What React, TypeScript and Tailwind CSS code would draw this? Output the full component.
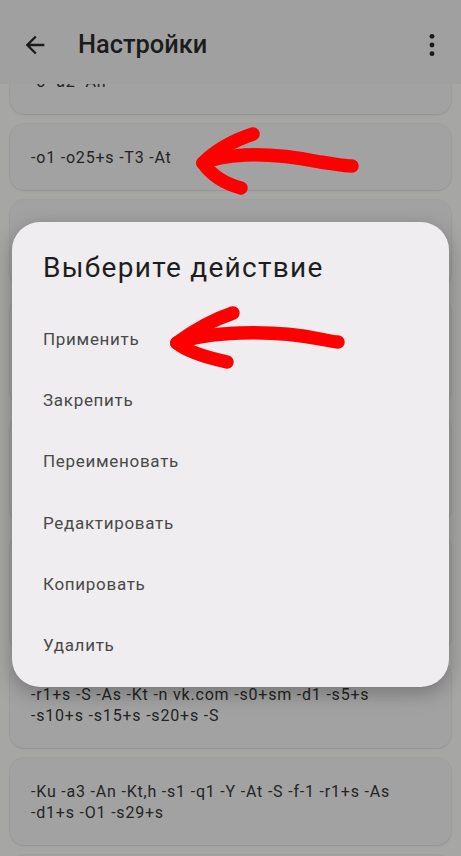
import React, { useLayoutEffect, useRef } from "react";

type Card = { lines: string[]; extra?: boolean };

const cards: Card[] = [
  { lines: ["-o -a2 -An"] },
  { lines: ["-o1 -o25+s -T3 -At"] },
  { lines: ["-Ku -a3 -An -Kt,h -s1 -q1 -Y -At", "-d1+s -O1"] },
  { lines: ["-r1+s -S -As -Kt -n vk.com -s0+sm", "-s5+s -s10+s -s15+s -s20+s -S", "-O1 -s29+s"] },
  { lines: ["-Ku -a3 -An -Kt,h -s1 -q1 -Y -At", "-r1+s -As -d1+s -O1 -s29+s", "-T3 -At"] },
  { lines: ["-o1 -o25+s -T3 -At -Ku -a3 -An", "-s1 -q1 -Y -At -S -f-1 -r1+s", "-d1+s -O1"], extra: true },
  { lines: ["-r1+s -S -As -Kt -n vk.com -s0+sm -d1 -s5+s", "-s10+s -s15+s -s20+s -S"] },
  { lines: ["-Ku -a3 -An -Kt,h -s1 -q1 -Y -At -S -f-1 -r1+s -As", "-d1+s -O1 -s29+s"] },
  { lines: ["-o1 -o25+s -T3 -At"] },
];

const actions = ["Применить", "Закрепить", "Переименовать", "Редактировать", "Копировать", "Удалить"];

export default function App() {
  const scrollRef = useRef<HTMLDivElement>(null);
  useLayoutEffect(() => {
    if (scrollRef.current) scrollRef.current.scrollTop = 46;
  }, []);

  return (
    <div
      className="relative h-[856px] w-[461px] overflow-hidden bg-[#a6a6a5] flex flex-col"
      style={{ fontFamily: "Roboto, 'Noto Sans', sans-serif" }}
    >
      {/* App bar */}
      <div className="h-[84px] shrink-0 bg-[#a0a0a0] flex items-center pt-[6px] relative z-10">
        <svg width="28" height="28" viewBox="0 0 24 24" className="ml-[21px] text-[#1a1a1a]" fill="currentColor">
          <path d="M20 11H7.83l5.59-5.59L12 4l-8 8 8 8 1.41-1.41L7.83 13H20v-2z" />
        </svg>
        <div className="ml-[29px] text-[25.4px] font-medium text-[#1c1c1c] leading-none">Настройки</div>
        <div className="flex-1" />
        <svg width="28" height="28" viewBox="0 0 24 24" className="mr-[15px] text-[#1a1a1a]" fill="currentColor">
          <circle cx="12" cy="4.6" r="2.1" />
          <circle cx="12" cy="12" r="2.1" />
          <circle cx="12" cy="19.4" r="2.1" />
        </svg>
      </div>

      {/* List */}
      <div ref={scrollRef} className="flex-1 overflow-hidden">
        <div className="flex flex-col gap-[10px] px-[10px] pt-[10px] pb-[40px]">
          {cards.map((c, i) => (
            <div
              key={i}
              className={
                "overflow-hidden rounded-[14px] bg-[#a2a2a2] shadow-[0_0_0_1px_rgba(0,0,0,0.035),0_1px_2px_rgba(0,0,0,0.08)] px-[21px] text-[16px] tracking-[0.8px] leading-[21px] text-[#242424] " +
                (c.extra ? "py-[27.5px]" : "py-[22.5px]")
              }
            >
              {c.lines.map((l, j) => (
                <div key={j} className="whitespace-nowrap">
                  {l}
                </div>
              ))}
            </div>
          ))}
        </div>
      </div>

      {/* Dialog overlay */}
      <div className="absolute inset-0 z-20 pt-[222px] px-[12px]">
        <div className="rounded-[28px] bg-[#efedef] shadow-[0_6px_20px_rgba(0,0,0,0.28)] pt-[30px] pb-[10px] px-[31px]">
          <div className="text-[28px] tracking-[1.3px] leading-[32px] text-[#1e1e1e] whitespace-nowrap">
            Выберите действие
          </div>
          <div className="mt-[25px] flex flex-col">
            {actions.map((a) => (
              <div key={a} className="h-[61.3px] flex items-center text-[17px] tracking-[0.7px] text-[#494949]">
                {a}
              </div>
            ))}
          </div>
        </div>
      </div>

      {/* Red hand-drawn arrows */}
      <svg
        className="absolute inset-0 z-30 pointer-events-none"
        width="461"
        height="856"
        viewBox="0 0 461 856"
        fill="none"
        stroke="#ff0000"
        strokeWidth="13.5"
        strokeLinecap="round"
        strokeLinejoin="round"
      >
        <path d="M203,163 C215,158 228,156 245,155 C275,154 300,158 320,162 C335,164 345,166 352,166" />
        <path d="M253,134 C232,141 214,152 203,163" />
        <path d="M203,163 C210,173 222,183 241,188" />
        <path d="M177,343 C195,336 215,334 240,333 C270,332 300,335 320,339 C330,341 335,342 338,342" />
        <path d="M233,313 C212,320 192,332 177,343" />
        <path d="M177,343 C185,350 200,356 227,362" />
      </svg>
    </div>
  );
}
